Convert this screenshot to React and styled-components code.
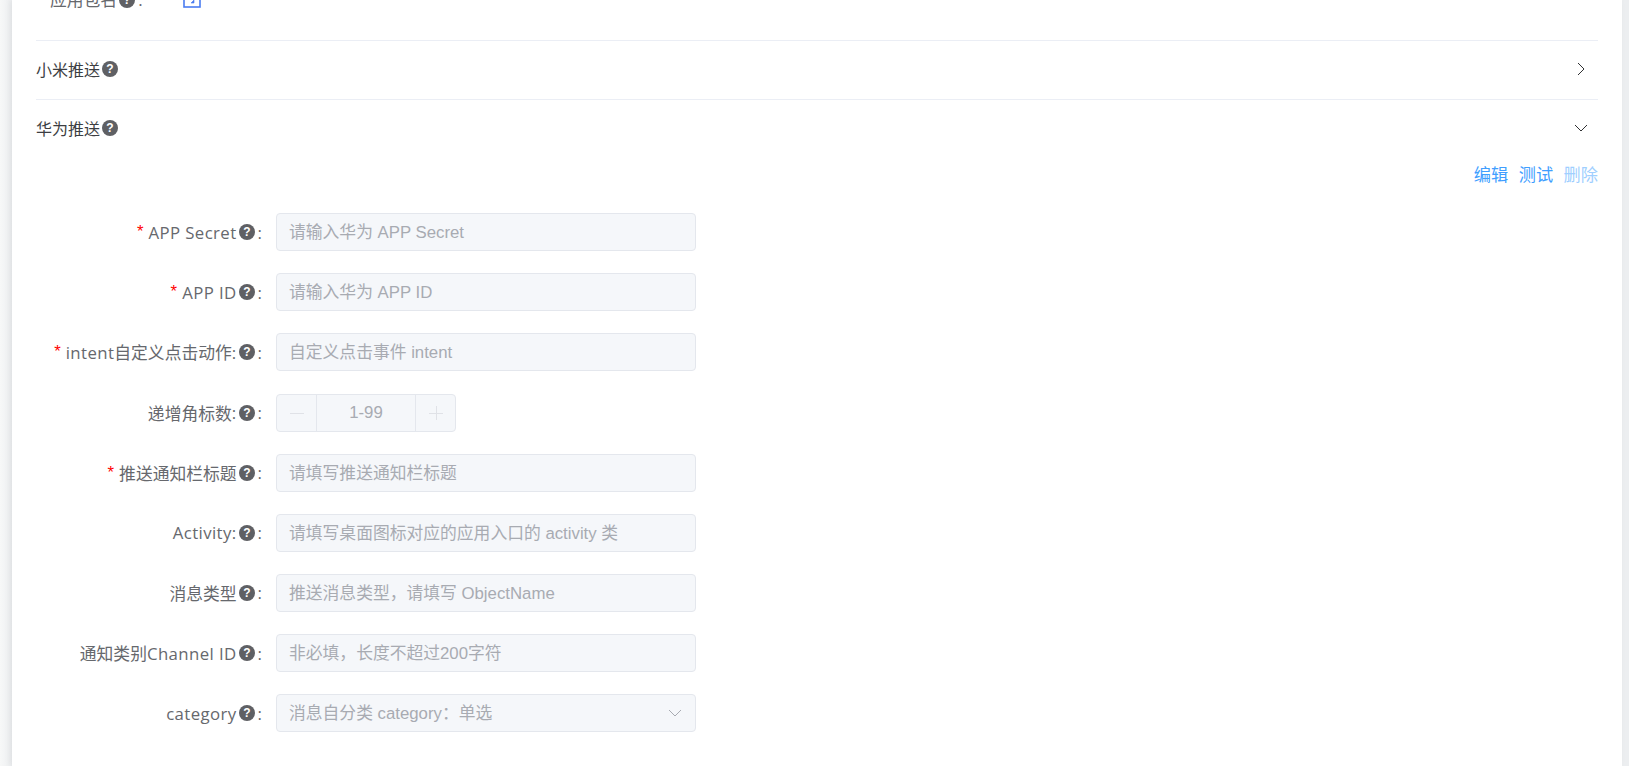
import React from "react";
import styled, { createGlobalStyle } from "styled-components";

const Global = createGlobalStyle`
  html, body { margin: 0; padding: 0; height: 766px; overflow: hidden; background: #eef0f1; }
  * { box-sizing: border-box; }
`;
const CJK = `"Noto Sans CJK SC", sans-serif`;
const Page = styled.div`
  height: 766px; overflow: hidden; padding: 0 7px 0 12px;
  background: linear-gradient(90deg, #f7f8f8 0, #eceef0 12px, #eceef0 100%);
  font-family: "Open Sans", ${CJK}; font-size: 16.8px; color: #66686d;
`;
const Card = styled.main`
  background: #fff; height: 766px; padding: 0 24px; box-shadow: -2px 0 6px rgba(0,0,0,.06);
`;
const ClippedRow = styled.div`
  height: 41px; overflow: hidden; border-bottom: 1px solid #ebeef5;
`;
const TopLine = styled.div`
  display: flex; align-items: center; margin-top: -12px; padding-left: 14px; height: 24px; line-height: 24px;
`;
const TopBtn = styled.svg`
  width: 18px; height: 24px; margin-left: 40px; flex: none;
`;
const Head = styled.div`
  height: 59px; padding-bottom: ${p => (p.$open ? "4px" : "2px")}; display: flex; align-items: center; justify-content: space-between;
  border-bottom: ${p => (p.$open ? "0" : "1px solid #ebeef5")}; color: #3c3e42; font-size: 16px;
`;
const HeadTitle = styled.div`display: flex; align-items: center;`;
const Tip = styled.svg`width: 16px; height: 16px; flex: none; margin-left: 2px;`;
const Chevron = styled.svg`width: 16px; height: 16px; margin-right: 9px; flex: none;`;
const Actions = styled.div`
  display: flex; justify-content: flex-end; gap: 10.5px; height: 32px; align-items: center; margin-top: -2px; font-size: 17.2px;
`;
const Act = styled.span`color: ${p => (p.$off ? "#a0cfff" : "#409eff")};`;
const Form = styled.div`display: flex; flex-direction: column; gap: 22.14px; margin-top: 24.2px;`;
const Row = styled.div`display: flex; align-items: center; height: 38px;`;
const Label = styled.label`
  width: 240px; padding-right: 14px; display: flex; justify-content: flex-end; align-items: center; white-space: nowrap;
`;
const Latin = styled.span`letter-spacing: 0.4px;`;
const Star = styled.span`color: #f00; margin-right: 5px; font-family: "Liberation Sans", sans-serif;`;
const Colon = styled.span`margin-left: 3px;`;
const Field = styled.div`
  width: 420px; height: 38px; background: #f5f7fa; border: 1px solid #e4e7ed; border-radius: 4px;
  padding: 0 12px 2px; display: flex; align-items: center; justify-content: space-between; color: #a8abb2;
  font-family: "Liberation Sans", ${CJK};
`;
const Stepper = styled.div`
  width: 180px; height: 38px; background: #f5f7fa; border: 1px solid #e4e7ed; border-radius: 4px;
  display: flex; color: #a8abb2; font-family: "Liberation Sans", ${CJK};
`;
const StepBtn = styled.div`
  width: 40px; display: flex; align-items: center; justify-content: center;
  ${p => (p.$left ? "border-right: 1px solid #e4e7ed;" : "border-left: 1px solid #e4e7ed;")}
`;
const StepIcon = styled.svg`width: 14px; height: 14px; stroke: #e0e2e7; fill: none;`;
const StepVal = styled.div`flex: 1; display: flex; align-items: center; justify-content: center;`;
const Caret = styled.svg`width: 16px; height: 16px; margin-top: 2px; color: #a8abb2;`;

const Help = () => (
  <Tip viewBox="0 0 16 16">
    <circle cx="8" cy="8" r="8" fill="#5f6064" />
    <text x="8" y="12.2" textAnchor="middle" fontSize="12" fontWeight="700" fill="#fff" fontFamily="Liberation Sans">?</text>
  </Tip>
);
const rows = [
  { l: "APP Secret", req: 1, p: "请输入华为 APP Secret" },
  { l: "APP ID", req: 1, p: "请输入华为 APP ID" },
  { l: "intent自定义点击动作:", req: 1, p: "自定义点击事件 intent" },
  { l: "递增角标数:", stepper: 1 },
  { l: "推送通知栏标题", req: 1, p: "请填写推送通知栏标题" },
  { l: "Activity:", p: "请填写桌面图标对应的应用入口的 activity 类" },
  { l: "消息类型", p: "推送消息类型，请填写 ObjectName" },
  { l: "通知类别Channel ID", p: "非必填，长度不超过200字符" },
  { l: "category", p: "消息自分类 category：单选", select: 1 },
];
const LabelText = ({ text }) =>
  text.split(/([\x20-\x7e]+)/).filter(Boolean).map((part, i) =>
    /^[\x20-\x7e]+$/.test(part) ? <Latin key={i}>{part}</Latin> : <span key={i}>{part}</span>
  );

export default function App() {
  return (
    <Page>
      <Global />
      <Card>
        <ClippedRow>
          <TopLine>
            应用包名<Help /><Colon>:</Colon>
            <TopBtn viewBox="0 0 18 24" fill="none" stroke="#4a7cf0" strokeWidth="1.6">
              <rect x="1" y="1" width="16" height="18" />
              <path d="M8 15h3v-3z" fill="#4a7cf0" strokeWidth="0.6" />
            </TopBtn>
          </TopLine>
        </ClippedRow>
        <Head>
          <HeadTitle>小米推送<Help /></HeadTitle>
          <Chevron viewBox="0 0 16 16" fill="none" stroke="#303133"><path d="M5 2l6 6-6 6" /></Chevron>
        </Head>
        <Head $open>
          <HeadTitle>华为推送<Help /></HeadTitle>
          <Chevron viewBox="0 0 16 16" fill="none" stroke="#303133"><path d="M2 5l6 6 6-6" /></Chevron>
        </Head>
        <Actions>
          <Act>编辑</Act><Act>测试</Act><Act $off>删除</Act>
        </Actions>
        <Form>
          {rows.map(r => (
            <Row key={r.l}>
              <Label>
                {r.req ? <Star>*</Star> : null}<LabelText text={r.l} /><Help /><Colon>:</Colon>
              </Label>
              {r.stepper ? (
                <Stepper>
                  <StepBtn $left><StepIcon viewBox="0 0 14 14"><path d="M0 7.5h14" /></StepIcon></StepBtn>
                  <StepVal>1-99</StepVal>
                  <StepBtn><StepIcon viewBox="0 0 14 14"><path d="M0 7.5h14M7.5 0v14" /></StepIcon></StepBtn>
                </Stepper>
              ) : (
                <Field>
                  {r.p}
                  {r.select ? (
                    <Caret viewBox="0 0 16 16" fill="none" stroke="currentColor"><path d="M2 5l6 6 6-6" /></Caret>
                  ) : null}
                </Field>
              )}
            </Row>
          ))}
        </Form>
      </Card>
    </Page>
  );
}
